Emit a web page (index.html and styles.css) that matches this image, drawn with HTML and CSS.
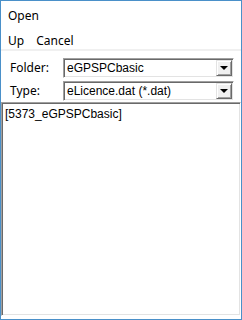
FILE: index.html
```html
<!DOCTYPE html>
<html lang="en">
<head>
  <meta charset="UTF-8">
  <meta name="viewport" content="width=device-width, initial-scale=1.0">
  <title>Open</title>
  <link rel="stylesheet" href="styles.css">
</head>
<body>
  <div class="window">
    <div class="title">Open</div>
    <div class="menu">
      <span class="menu-item">Up</span>
      <span class="menu-item">Cancel</span>
    </div>
    <div class="separator"></div>

    <div class="form">
      <div class="field">
        <label class="field-label">Folder:</label>
        <div class="combo">
          <span class="combo-text">eGPSPCbasic</span>
          <span class="combo-button"><span class="arrow"></span></span>
        </div>
      </div>
      <div class="field">
        <label class="field-label">Type:</label>
        <div class="combo">
          <span class="combo-text">eLicence.dat (*.dat)</span>
          <span class="combo-button"><span class="arrow"></span></span>
        </div>
      </div>
    </div>

    <div class="file-list">
      <div class="file-item">[5373_eGPSPCbasic]</div>
    </div>
  </div>
</body>
</html>
```

FILE: styles.css
```css
body {
  margin: 0;
  padding: 0;
  background-color: #ffffff;
  font-family: "Noto Sans", "Open Sans", sans-serif;
}
.window {
  width: 242px;
  height: 320px;
  box-sizing: border-box;
  border: 1px solid #4a90c9;
  background-color: #ffffff;
  display: flex;
  flex-direction: column;
}
.title {
  font-size: 12px;
  line-height: 16px;
  padding: 7px 0 0 7px;
  height: 23px;
  color: #000;
}
.menu {
  display: flex;
  gap: 12px;
  font-size: 12px;
  line-height: 16px;
  padding: 2px 0 0 7px;
  height: 16px;
  color: #000;
}
.separator {
  height: 2px;
  background-color: #f0f0f0;
}
.form {
  display: flex;
  flex-direction: column;
  gap: 3px;
  padding: 7px 7px 0 9px;
}
.field {
  display: flex;
  align-items: center;
}
.field-label {
  width: 53px;
  font-size: 12px;
  line-height: 16px;
  color: #000;
}
.combo {
  flex: 1;
  height: 20px;
  box-sizing: border-box;
  display: flex;
  align-items: stretch;
  border-top: 1px solid #a0a0a0;
  border-left: 1px solid #a0a0a0;
  border-right: 1px solid #ffffff;
  border-bottom: 1px solid #ffffff;
  box-shadow: inset 1px 1px 0 #696969, inset -1px -1px 0 #e3e3e3;
  background-color: #ffffff;
}
.combo-text {
  flex: 1;
  font-family: "Liberation Sans", Arial, sans-serif;
  font-size: 12px;
  line-height: 18px;
  padding-left: 3px;
  color: #000;
}
.combo-button {
  width: 16px;
  margin: 1px 1px 1px 0;
  box-sizing: border-box;
  background-color: #f0f0f0;
  border-top: 1px solid #e3e3e3;
  border-left: 1px solid #e3e3e3;
  border-right: 1px solid #696969;
  border-bottom: 1px solid #696969;
  box-shadow: inset 1px 1px 0 #ffffff, inset -1px -1px 0 #a0a0a0;
  display: flex;
  align-items: center;
  justify-content: center;
}
.arrow {
  width: 0;
  height: 0;
  border-left: 4px solid transparent;
  border-right: 4px solid transparent;
  border-top: 4px solid #000;
}
.file-list {
  flex: 1;
  margin: 1px 0 3px 0;
  box-sizing: border-box;
  border-top: 1px solid #a0a0a0;
  border-left: 1px solid #a0a0a0;
  border-right: 1px solid #ffffff;
  border-bottom: 1px solid #ffffff;
  box-shadow: inset 1px 1px 0 #696969, inset -1px -1px 0 #e3e3e3;
  padding: 4px 3px;
}
.file-item {
  font-family: "Liberation Sans", Arial, sans-serif;
  font-size: 12px;
  line-height: 14px;
  color: #000;
}
```
